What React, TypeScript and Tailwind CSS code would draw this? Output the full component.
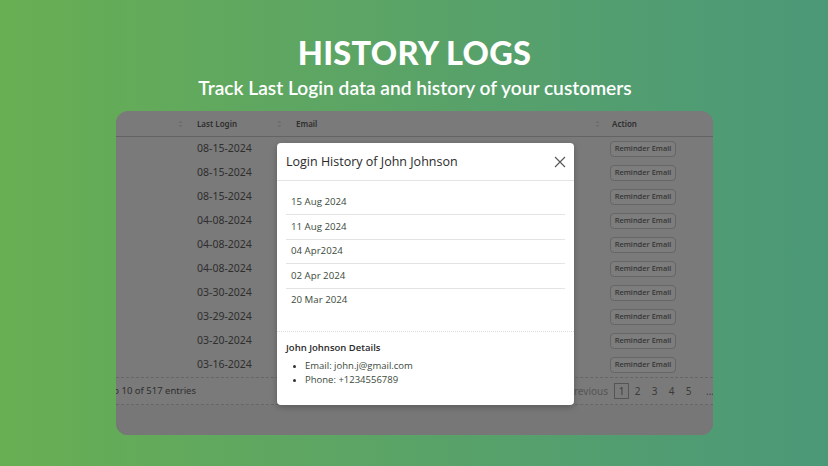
import React from "react";

const dates = [
  "08-15-2024",
  "08-15-2024",
  "08-15-2024",
  "04-08-2024",
  "04-08-2024",
  "04-08-2024",
  "03-30-2024",
  "03-29-2024",
  "03-20-2024",
  "03-16-2024",
];

const history = ["15 Aug 2024", "11 Aug 2024", "04 Apr2024", "02 Apr 2024", "20 Mar 2024"];

function SortIcon() {
  return (
    <svg width="5" height="8" viewBox="0 0 5 8" className="shrink-0">
      <path d="M2.5 0.5 L4.5 3 H0.5 Z" fill="#6e6e6e" />
      <path d="M2.5 7.5 L4.5 5 H0.5 Z" fill="#6e6e6e" />
    </svg>
  );
}

export default function App() {
  const font = { fontFamily: '"Open Sans", "Noto Sans", sans-serif' };
  return (
    <div
      className="w-[828px] h-[466px] overflow-hidden flex flex-col items-center bg-gradient-to-r from-[#68ae52] to-[#4b9878]"
      style={{ fontFamily: "Lato, sans-serif" }}
    >
      <h1 className="mt-[33px] ml-[1px] text-[32.5px] leading-[40px] font-black text-white tracking-[0.3px]">
        HISTORY LOGS
      </h1>
      <p className="mt-[2px] ml-[2px] text-[19.2px] leading-[26px] font-semibold text-white">
        Track Last Login data and history of your customers
      </p>

      <div
        className="relative mt-[10px] ml-[1px] w-[597px] h-[324px] rounded-[12px] overflow-hidden bg-[#7a7a7a] text-[#2e2e2e]"
        style={{ fontFamily: '"Noto Sans", sans-serif' }}
      >
        {/* header */}
        <div className="grid grid-cols-[74px_99px_316px_108px] h-[26px] border-b border-[#636363] text-[8px] font-semibold items-center">
          <div className="flex justify-end pr-[7px]">
            <SortIcon />
          </div>
          <div className="flex items-center justify-between pl-[7px] pr-[7px]">
            <span>Last Login</span>
            <SortIcon />
          </div>
          <div className="flex items-center justify-between pl-[7px] pr-[5px]">
            <span>Email</span>
            <SortIcon />
          </div>
          <div className="pl-[7px]">Action</div>
        </div>

        {dates.map((d, i) => (
          <div
            key={i}
            className="grid grid-cols-[74px_99px_316px_108px] h-[24px] items-center text-[10.5px]"
          >
            <div />
            <div className="pl-[7px]">{d}</div>
            <div />
            <div className="pl-[5px]">
              <div className="w-[66px] h-[16px] rounded-[4px] border border-[#666] flex items-center justify-center text-[7.5px] font-medium text-[#333] bg-[#7d7d7d]">
                Reminder Email
              </div>
            </div>
          </div>
        ))}

        {/* footer */}
        <div className="h-[28px] border-t border-dashed border-[#666] border-b flex items-center justify-between">
          <div className="w-[80px] flex justify-end">
            <span className="whitespace-nowrap text-[9.5px]">Showing 1 to 10 of 517 entries</span>
          </div>
          <div className="flex items-center text-[10px] text-[#3a3a3a] mr-[-10px]">
            <span className="mr-[6px] text-[#555]">Previous</span>
            <span className="w-[15px] h-[16px] border border-[#555] flex items-center justify-center">1</span>
            <span className="w-[17px] text-center">2</span>
            <span className="w-[17px] text-center">3</span>
            <span className="w-[17px] text-center">4</span>
            <span className="w-[17px] text-center">5</span>
            <span className="w-[26px] text-center">...</span>
          </div>
        </div>
        <div className="h-[31px] bg-[#777]" />

        {/* modal */}
        <div
          className="absolute left-[161px] top-[32px] w-[297px] h-[262px] bg-white rounded-[4px] shadow-[0_2px_6px_rgba(0,0,0,0.25)] flex flex-col"
          style={font}
        >
          <div className="h-[38px] shrink-0 border-b border-[#e3e3e3] flex items-center justify-between pl-[9px] pr-[8px]">
            <span className="text-[12.5px] text-[#2a2a2a] mt-[2px]">Login History of John Johnson</span>
            <svg width="12" height="12" viewBox="0 0 12 12" className="mt-[1px]">
              <path d="M1 1 L11 11 M11 1 L1 11" stroke="#555" strokeWidth="1.1" fill="none" />
            </svg>
          </div>
          <div className="px-[9px] pt-[10px] h-[150px] shrink-0">
            {history.map((h, i) => (
              <div
                key={i}
                className={`h-[24.4px] flex items-center pl-[5px] text-[9.7px] text-[#3b4a3b] ${
                  i < history.length - 1 ? "border-b border-[#e4e4e4]" : ""
                }`}
              >
                {h}
              </div>
            ))}
          </div>
          <div className="border-t border-dotted border-[#dcdcdc] px-[9px] pt-[9px]">
            <div className="text-[9.5px] font-semibold text-[#2a2a2a] leading-[14px]">John Johnson Details</div>
            <ul className="mt-[4px] pl-[7px] text-[9.5px] text-[#3b4a3b] leading-[14px]">
              <li className="flex items-center">
                <span className="w-[3px] h-[3px] rounded-full bg-[#333] mr-[9px]" />
                Email: john.j@gmail.com
              </li>
              <li className="flex items-center">
                <span className="w-[3px] h-[3px] rounded-full bg-[#333] mr-[9px]" />
                Phone: +1234556789
              </li>
            </ul>
          </div>
        </div>
      </div>
    </div>
  );
}
